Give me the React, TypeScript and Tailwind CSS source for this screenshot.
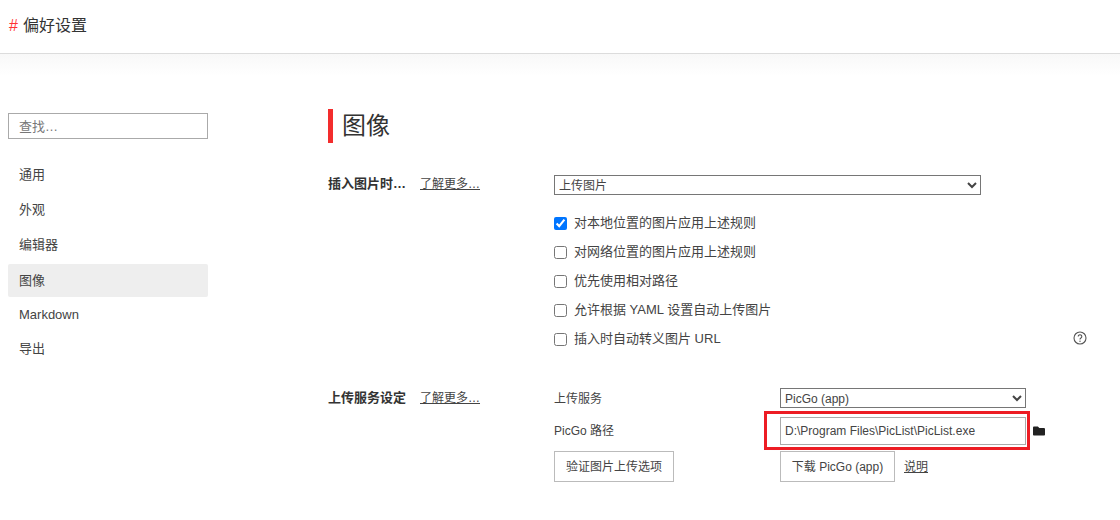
import { FaFolder } from "react-icons/fa";

const fontStack = "font-['Liberation_Sans','Noto_Sans_CJK_SC',sans-serif]";

const navItems = ["通用", "外观", "编辑器", "图像", "Markdown", "导出"];

const imageOptions = [
  { label: "对本地位置的图片应用上述规则", checked: true },
  { label: "对网络位置的图片应用上述规则", checked: false },
  { label: "优先使用相对路径", checked: false },
  { label: "允许根据 YAML 设置自动上传图片", checked: false },
  { label: "插入时自动转义图片 URL", checked: false },
];

function SectionLabel({ title, className = "" }: { title: string; className?: string }) {
  return (
    <div className={`flex w-[226px] shrink-0 items-start ${className}`}>
      <span className="w-[92px] text-[13px] leading-[18px] font-bold text-[#333]">{title}</span>
      <a className="text-[12px] leading-[18px] text-[#444] underline">了解更多…</a>
    </div>
  );
}

function HelpIcon() {
  return (
    <svg viewBox="0 0 14 14" className="absolute bottom-[4px] left-[519px] h-[14px] w-[14px] text-[#555]" fill="none">
      <circle cx="7" cy="7" r="6" stroke="currentColor" strokeWidth="1.1" />
      <path d="M5.2 5.5a1.8 1.8 0 1 1 2.7 1.6c-.6.35-.9.7-.9 1.3" stroke="currentColor" strokeWidth="1.1" />
      <circle cx="7" cy="10.2" r=".7" fill="currentColor" />
    </svg>
  );
}

export default function App() {
  return (
    <div className={`h-[520px] w-[1120px] overflow-hidden bg-white text-[#444] ${fontStack}`}>
      <header className="flex h-[54px] items-center border-b border-[#dcdcdc] pb-[1px] pl-[9px]">
        <span className="mr-[5px] text-[16px] text-[#f33]">#</span>
        <span className="text-[16px] text-[#333]">偏好设置</span>
      </header>

      <div className="h-[520px] bg-gradient-to-b from-[#f8f8f8] to-white to-[22px] pt-[55px]">
        <div className="flex">
          <aside className="ml-2 w-[200px] shrink-0 pt-[4px]">
            <input
              placeholder="查找…"
              className="h-[26px] w-full border border-[#aaa] px-[10px] text-[13px] outline-none placeholder:text-[#777]"
            />
            <nav className="mt-[18px] flex flex-col">
              {navItems.map((item) => (
                <div
                  key={item}
                  className={`flex items-center rounded-[2px] px-[11px] text-[13px] last:h-[33px] ${
                    item === "图像" ? "mt-[2px] h-[33px] bg-[#eee]" : "h-[35px]"
                  }`}
                >
                  {item}
                </div>
              ))}
            </nav>
          </aside>

          <main className="ml-[120px] w-[760px]">
            <h1 className="flex h-[34px] items-center border-l-[5px] border-[#f32d2d] pl-[9px] text-[24px] font-normal text-[#333]">
              图像
            </h1>

            <section className="mt-[32px] flex">
              <SectionLabel title="插入图片时…" />
              <div className="flex-1">
                <select className="block h-[20px] w-[427px] border border-[#767676] bg-white pt-[2px] text-[12px] text-[#444]">
                  <option>上传图片</option>
                </select>
                <div className="relative mt-[18px] flex flex-col gap-[9px]">
                  {imageOptions.map((option) => (
                    <label key={option.label} className="flex h-[20px] items-center text-[13px]">
                      <input
                        type="checkbox"
                        defaultChecked={option.checked}
                        className="m-0 mr-[7px] h-[13px] w-[13px] accent-[#0075ff]"
                      />
                      {option.label}
                    </label>
                  ))}
                  <HelpIcon />
                </div>
              </div>
            </section>

            <section className="mt-[39px] flex">
              <SectionLabel title="上传服务设定" className="pt-[1px]" />
              <div className="grid flex-1 grid-cols-[226px_1fr] items-center text-[12px]">
                <span className="pt-[2px]">上传服务</span>
                <select className="block h-[20px] w-[246px] border border-[#767676] bg-white pt-[2px] text-[12px] text-[#444]">
                  <option>PicGo (app)</option>
                </select>

                <span className="mt-[9px]">PicGo 路径</span>
                <div className="relative mt-[9px] flex items-center">
                  <input
                    readOnly
                    value="D:\Program Files\PicList\PicList.exe"
                    className="h-[28px] w-[246px] border border-[#aaa] px-[4px] text-[12px] text-[#444] outline-none"
                  />
                  <FaFolder className="ml-[7px] text-[12px] text-[#222]" />
                  <div className="pointer-events-none absolute top-[-6px] left-[-16px] h-[39px] w-[266px] border-[3px] border-[#ed1c24]" />
                </div>

                <div className="mt-[6px]">
                  <button className="h-[31px] w-[120px] border border-[#bbb] text-[12px]">验证图片上传选项</button>
                </div>
                <div className="mt-[6px] flex items-center">
                  <button className="h-[31px] w-[115px] border border-[#bbb] text-[12px]">下载 PicGo (app)</button>
                  <a className="ml-[9px] underline">说明</a>
                </div>
              </div>
            </section>
          </main>
        </div>
      </div>
    </div>
  );
}
